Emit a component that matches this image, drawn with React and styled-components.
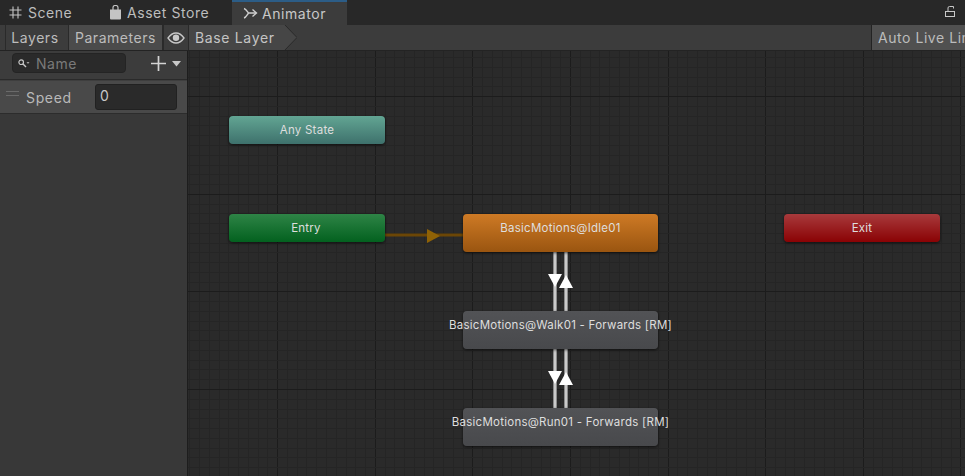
import React from 'react';
import styled, { createGlobalStyle } from 'styled-components';

const GlobalStyle = createGlobalStyle`
  html, body {
    margin: 0;
    padding: 0;
    background: #282828;
  }
  * {
    box-sizing: border-box;
  }
`;

const Window = styled.div`
  width: 965px;
  height: 476px;
  display: flex;
  flex-direction: column;
  overflow: hidden;
  font-family: 'Inter', 'Liberation Sans', sans-serif;
  color: #c4c4c4;
`;

// Tabs along the top
const TabBar = styled.div`
  height: 25px;
  flex: none;
  display: flex;
  align-items: stretch;
  background: #282828;
  position: relative;
`;

const Tab = styled.div`
  width: ${(p) => p.$width}px;
  display: flex;
  align-items: center;
  gap: ${(p) => p.$gap || 6}px;
  padding-left: ${(p) => p.$pad || 0}px;
  font-size: 14px;
  letter-spacing: 0.55px;
  background: ${(p) => (p.$active ? '#3c3c3c' : 'transparent')};
  border-top: ${(p) => (p.$active ? '2px solid #2c5d87' : 'none')};
  color: ${(p) => (p.$active ? '#c8c8c8' : '#bdbdbd')};
`;

const LockButton = styled.div`
  position: absolute;
  right: 10px;
  top: 6px;
  width: 10px;
  height: 11px;
`;

// Second row with the sub tabs and breadcrumb
const Toolbar = styled.div`
  height: 26px;
  flex: none;
  display: flex;
  align-items: stretch;
  background: #3c3c3c;
  border-bottom: 1px solid #232323;
`;

const SubTab = styled.div`
  width: ${(p) => p.$width}px;
  margin-left: ${(p) => p.$offset || 0}px;
  padding-right: ${(p) => p.$shift || 0}px;
  display: flex;
  align-items: center;
  justify-content: center;
  font-size: 14px;
  letter-spacing: 0.55px;
  color: #bcbcbc;
  background: ${(p) => (p.$on ? '#4b4b4b' : '#3c3c3c')};
  border-left: 1px solid #2a2a2a;
  border-right: ${(p) => (p.$on ? '1px solid #2a2a2a' : 'none')};
`;

const Crumb = styled.div`
  width: 96px;
  display: flex;
  align-items: center;
  padding-left: 6px;
  font-size: 14px;
  letter-spacing: 0.65px;
  white-space: nowrap;
  color: #c4c4c4;
  background: #464646;
  border-left: 1px solid #2a2a2a;
`;

const CrumbTip = styled.svg`
  width: 13px;
  height: 25px;
  flex: none;
  display: block;
`;

const ToolbarFill = styled.div`
  flex: 1;
`;

const LiveLink = styled.div`
  width: 94px;
  display: flex;
  align-items: center;
  padding-left: 6px;
  font-size: 14px;
  letter-spacing: 0.55px;
  white-space: nowrap;
  overflow: hidden;
  color: #bcbcbc;
  background: #505050;
  border-left: 1px solid #232323;
`;

const Body = styled.div`
  flex: 1;
  display: flex;
  min-height: 0;
`;

// Parameters panel on the left
const Sidebar = styled.div`
  width: 188px;
  flex: none;
  display: flex;
  flex-direction: column;
  background: #383838;
  border-right: 1px solid #1d1d1d;
`;

const SearchRow = styled.div`
  height: 29px;
  flex: none;
  display: flex;
  align-items: center;
  padding: 0 6px 4px 12px;
  background: #3c3c3c;
  border-bottom: 1px solid #2a2a2a;
`;

const SearchField = styled.div`
  width: 115px;
  height: 20px;
  display: flex;
  align-items: center;
  gap: 6px;
  padding-left: 5px;
  font-size: 14px;
  letter-spacing: 0.55px;
  color: #7a7a7a;
  background: #2a2a2a;
  border: 1px solid #242424;
  border-radius: 4px;
`;

const AddButton = styled.div`
  margin-left: 24px;
  padding-top: 1px;
  display: flex;
  align-items: center;
  gap: 5px;
`;

const ParamRow = styled.div`
  height: 34px;
  flex: none;
  display: flex;
  align-items: center;
  padding-left: 6px;
  background: #494949;
  border-bottom: 1px solid #2c2c2c;
  border-top: 1px solid #3e3e3e;
`;

const Grip = styled.div`
  width: 13px;
  height: 5px;
  margin-top: -8px;
  border-top: 1px solid #6a6a6a;
  border-bottom: 1px solid #6a6a6a;
`;

const ParamName = styled.div`
  width: 76px;
  padding-left: 7px;
  font-size: 14px;
  letter-spacing: 0.65px;
  color: #b9b9b9;
`;

const ParamInput = styled.div`
  width: 82px;
  height: 26px;
  display: flex;
  align-items: center;
  padding: 0 0 4px 4px;
  font-size: 14px;
  color: #c8c8c8;
  background: #2a2a2a;
  border: 1px solid #212121;
  border-radius: 3px;
`;

// Graph canvas
const Graph = styled.div`
  position: relative;
  flex: 1;
  background-color: #2a2a2a;
`;

const Wires = styled.svg`
  position: absolute;
  inset: 0;
  width: 100%;
  height: 100%;
`;

const nodeColors = {
  any: 'linear-gradient(to bottom, #62a593, #3e716c)',
  entry: 'linear-gradient(to bottom, #2e8446, #03611f)',
  exit: 'linear-gradient(to bottom, #a83a3c, #8a0204)',
  idle: 'linear-gradient(to bottom, #ce7a25, #9a5510)',
  plain: 'linear-gradient(to bottom, #525356, #48494c)',
};

const Node = styled.div`
  position: absolute;
  left: ${(p) => p.$x}px;
  top: ${(p) => p.$y}px;
  width: ${(p) => p.$w}px;
  height: ${(p) => p.$h}px;
  display: flex;
  justify-content: center;
  padding-top: 7px;
  padding-right: ${(p) => p.$shift || 0}px;
  font-size: 11.5px;
  line-height: 14px;
  letter-spacing: 0.25px;
  white-space: nowrap;
  color: #dedede;
  background: ${(p) => nodeColors[p.$kind]};
  border-radius: 4px;
  box-shadow: 0 1px 3px rgba(0, 0, 0, 0.65);
`;

const nodes = [
  { label: 'Any State', kind: 'any', x: 41, y: 65, w: 156, h: 28 },
  { label: 'Entry', kind: 'entry', x: 41, y: 163, w: 156, h: 28, shift: 2 },
  { label: 'BasicMotions@Idle01', kind: 'idle', x: 275, y: 163, w: 195, h: 38 },
  { label: 'BasicMotions@Walk01 - Forwards [RM]', kind: 'plain', x: 275, y: 260, w: 195, h: 38 },
  { label: 'BasicMotions@Run01 - Forwards [RM]', kind: 'plain', x: 275, y: 357, w: 195, h: 38 },
  { label: 'Exit', kind: 'exit', x: 596, y: 163, w: 156, h: 28 },
];

// Grid line offsets inside the canvas, every tenth one is a major line
const STEP = 9.76;
const gridLines = (origin, size) => {
  const lines = [];
  for (let i = -10; i * STEP + origin < size; i++) {
    const at = Math.floor(i * STEP + origin) + 0.5;
    if (at > 0) lines.push({ at, major: i % 10 === 0 });
  }
  return lines;
};
const columns = gridLines(89.7, 777);
const rows = gridLines(45.7, 425);

const GridLines = () => (
  <g shapeRendering="crispEdges">
    {columns.map((c) => (
      <line key={`c${c.at}`} x1={c.at} y1="0" x2={c.at} y2="425" stroke={c.major ? '#1c1c1c' : '#252525'} />
    ))}
    {rows.map((r) => (
      <line key={`r${r.at}`} x1="0" y1={r.at} x2="777" y2={r.at} stroke={r.major ? '#1c1c1c' : '#252525'} />
    ))}
  </g>
);

// One pair of white up/down transition lines between two states
const TransitionPair = ({ top, bottom, arrow }) => (
  <>
    <line x1="367" y1={top} x2="367" y2={bottom} stroke="#8c8c8c" strokeWidth="4" />
    <line x1="378" y1={top} x2="378" y2={bottom} stroke="#8c8c8c" strokeWidth="4" />
    <line x1="367" y1={top} x2="367" y2={bottom} stroke="#e4e4e4" strokeWidth="1.4" />
    <line x1="378" y1={top} x2="378" y2={bottom} stroke="#e4e4e4" strokeWidth="1.4" />
    <polygon points={`360,${arrow} 374,${arrow} 367,${arrow + 13}`} fill="#ffffff" />
    <polygon points={`371,${arrow + 14} 385,${arrow + 14} 378,${arrow + 1}`} fill="#ffffff" />
  </>
);

const App = () => (
  <Window>
    <GlobalStyle />
    <TabBar>
      <Tab $width={100} $pad={9}>
        <svg width="13" height="13" viewBox="0 0 13 13">
          <path d="M4 .5v12M9 .5v12M.5 4h12M.5 9h12" fill="none" stroke="#c4c4c4" strokeWidth="1.1" />
        </svg>
        Scene
      </Tab>
      <Tab $width={132} $pad={9} $gap={5}>
        <svg width="13" height="15" viewBox="0 0 13 15">
          <path d="M1 4.5h11v9a1 1 0 0 1-1 1H2a1 1 0 0 1-1-1z" fill="#c4c4c4" />
          <path d="M4 6V2.5a2.5 2 0 0 1 5 0V6" fill="none" stroke="#c4c4c4" strokeWidth="1.2" />
        </svg>
        Asset Store
      </Tab>
      <Tab $width={115} $active $pad={11} $gap={4}>
        <svg width="15" height="13" viewBox="0 0 15 13">
          <path d="M1 1.5c2 .5 3 2.500 4.500 4.500h7.500M1 11c2-.5 3-3 4.500-5" fill="none" stroke="#d0d0d0" strokeWidth="1.4" />
          <path d="M9.500 2.500l4 3.500-4 3.500" fill="none" stroke="#d0d0d0" strokeWidth="1.4" />
        </svg>
        Animator
      </Tab>
      <LockButton>
        <svg width="10" height="11" viewBox="0 0 10 11" style={{ display: 'block' }}>
          <rect x="0.500" y="5.500" width="9" height="5" fill="none" stroke="#c8c8c8" />
          <path d="M3 5.500V2a1.500 1.500 0 0 1 1.500-1.500H8.500V2.500" fill="none" stroke="#c8c8c8" />
        </svg>
      </LockButton>
    </TabBar>
    <Toolbar>
      <SubTab $width={63} $offset={5} $shift={4}>Layers</SubTab>
      <SubTab $width={95} $on>Parameters</SubTab>
      <SubTab $width={25}>
        <svg width="18" height="12" viewBox="0 0 18 12">
          <path d="M1 6c2.500-3.500 5-5 8-5s5.500 1.500 8 5c-2.500 3.500-5 5-8 5S3.500 9.500 1 6z" fill="none" stroke="#c8c8c8" strokeWidth="1.300" />
          <circle cx="9" cy="5.700" r="3.200" fill="#c8c8c8" />
        </svg>
      </SubTab>
      <Crumb>Base Layer</Crumb>
      <CrumbTip viewBox="0 0 13 25">
        <polygon points="0,0 1,0 13,12.500 1,25 0,25" fill="#464646" />
        <polyline points="1,0 13,12.500 1,25" fill="none" stroke="#2a2a2a" />
      </CrumbTip>
      <ToolbarFill />
      <LiveLink>Auto Live Link</LiveLink>
    </Toolbar>
    <Body>
      <Sidebar>
        <SearchRow>
          <SearchField>
            <svg width="12" height="9" viewBox="0 0 12 9">
              <circle cx="3.200" cy="3.200" r="2.300" fill="none" stroke="#c8c8c8" strokeWidth="1.200" />
              <path d="M5 5l3 3" stroke="#c8c8c8" strokeWidth="1.400" />
              <path d="M8.500 3h3l-1.500 2z" fill="#a0a0a0" />
            </svg>
            Name
          </SearchField>
          <AddButton>
            <svg width="17" height="17" viewBox="0 0 17 17">
              <path d="M8.500 1v15M1 8.500h15" stroke="#d4d4d4" strokeWidth="1.700" />
            </svg>
            <svg width="9" height="6" viewBox="0 0 9 6">
              <polygon points="0,0 9,0 4.500,5.500" fill="#c8c8c8" />
            </svg>
          </AddButton>
        </SearchRow>
        <ParamRow>
          <Grip />
          <ParamName>Speed</ParamName>
          <ParamInput>0</ParamInput>
        </ParamRow>
      </Sidebar>
      <Graph>
        <Wires>
          <GridLines />
          <line x1="197" y1="184" x2="275" y2="184" stroke="#6b4606" strokeWidth="3" />
          <polygon points="239,178 239,192 252,185" fill="#8f6206" />
          <TransitionPair top={201} bottom={260} arrow={223} />
          <TransitionPair top={298} bottom={357} arrow={320} />
        </Wires>
        {nodes.map((n) => (
          <Node key={n.label} $kind={n.kind} $x={n.x} $y={n.y} $w={n.w} $h={n.h} $shift={n.shift}>
            {n.label}
          </Node>
        ))}
      </Graph>
    </Body>
  </Window>
);

export default App;
